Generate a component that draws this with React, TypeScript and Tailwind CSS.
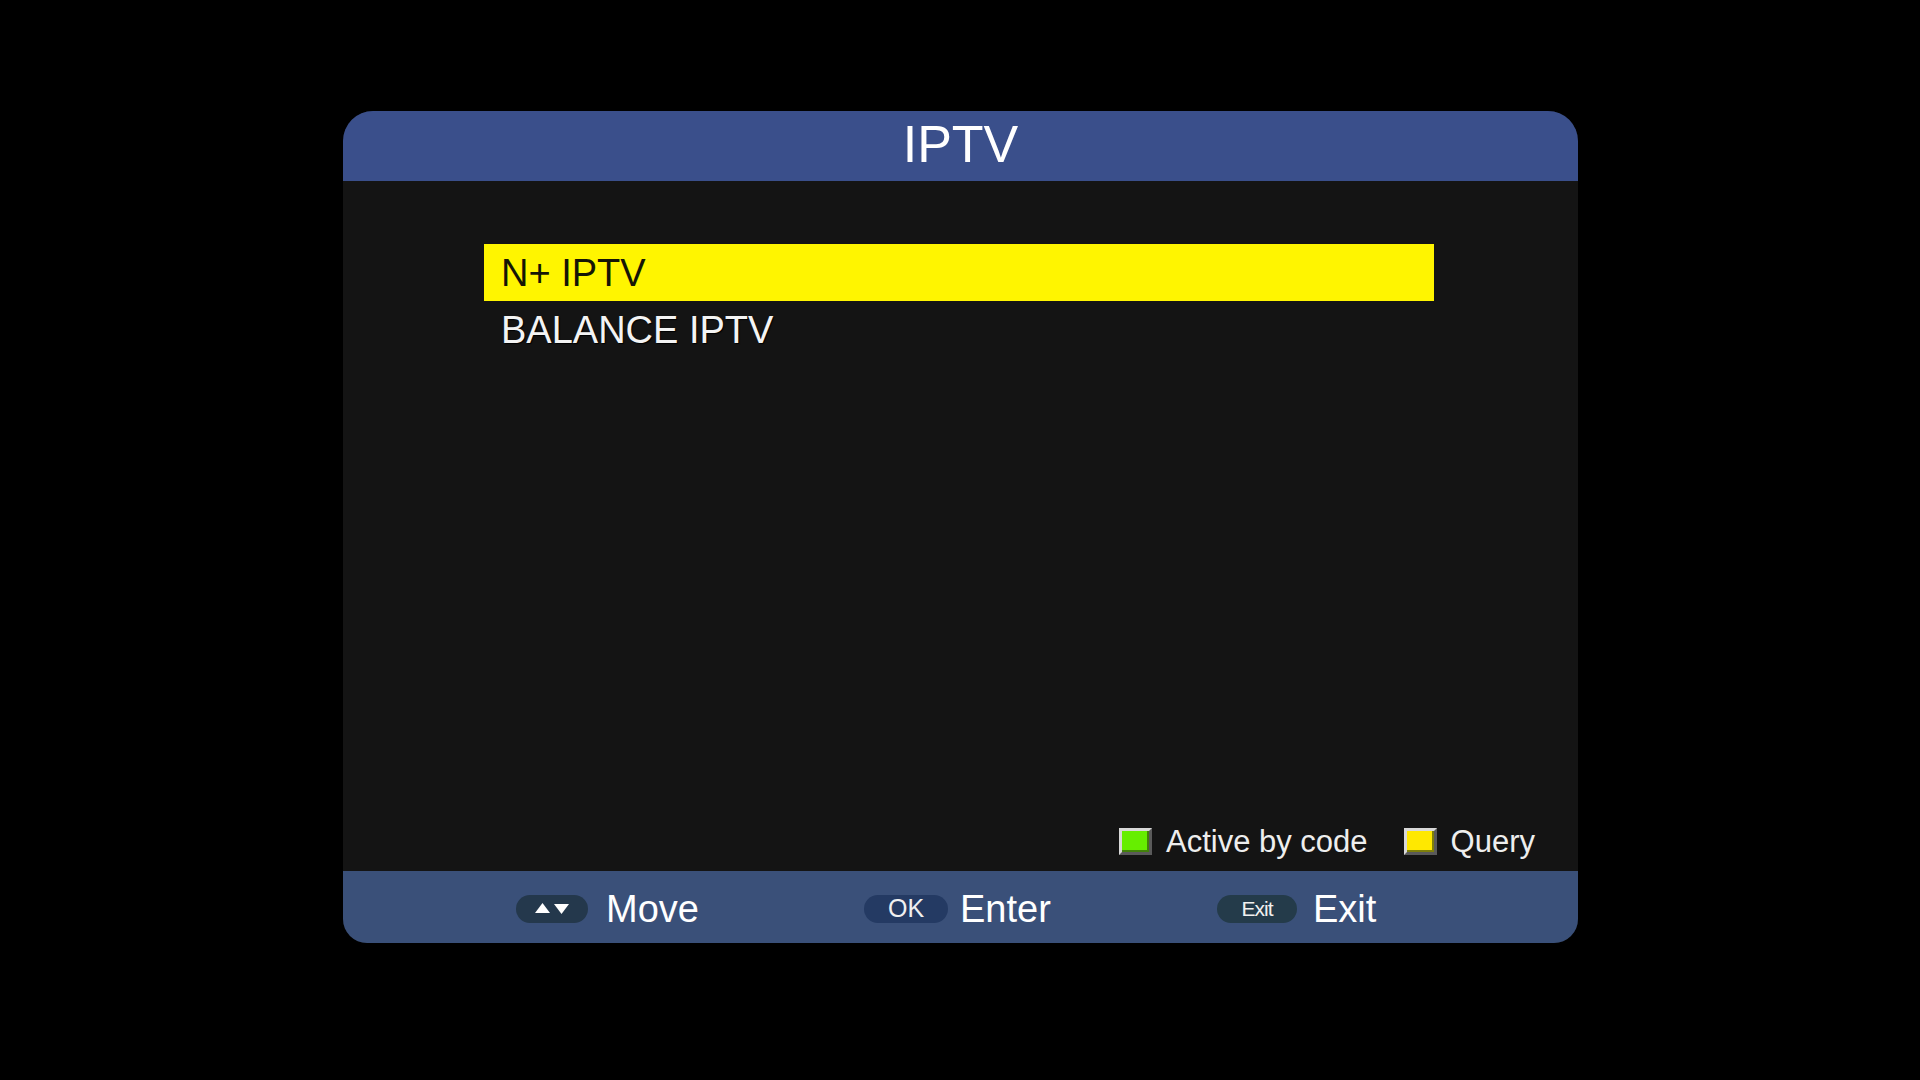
const items = ["N+ IPTV", "BALANCE IPTV"]

function Swatch({ color }: { color: string }) {
  return (
    <span className="inline-flex h-[27px] w-[33px] border-t-[3px] border-l-[3px] border-r-[3px] border-b-[3px] border-t-[#d8d8d8] border-l-[#d8d8d8] border-r-[#5a5a5a] border-b-[#5a5a5a]">
      <span className={`flex-1 ${color} border-r-2 border-b-2 border-r-[#2a3a10]/60 border-b-[#2a3a10]/60`} />
    </span>
  )
}

function Pill({ children, className }: { children: React.ReactNode; className: string }) {
  return (
    <span className={`flex h-[28px] items-center justify-center rounded-full ${className}`}>
      {children}
    </span>
  )
}

export default function App() {
  const selected = 0

  return (
    <div className="h-[1080px] w-[1920px] bg-black pt-[111px] pl-[343px] font-['Liberation_Sans',Arial,sans-serif]">
      <div className="flex h-[832px] w-[1235px] flex-col overflow-hidden rounded-t-[30px] rounded-b-[24px] bg-[#141414]">
        {/* title bar */}
        <div className="flex h-[70px] items-center justify-center bg-[#3a4f8b] pb-[4px]">
          <h1 className="text-[52px] leading-none text-white">IPTV</h1>
        </div>

        {/* menu list */}
        <div className="flex flex-1 flex-col px-[141px] pt-[63px]">
          {items.map((item, i) => (
            <div
              key={item}
              className={`flex h-[57px] w-[950px] items-center pl-[17px] text-[38px] leading-none ${
                i === selected ? "bg-[#fff500] text-[#151505]" : "text-[#f4f4f4] [text-shadow:1px_1px_1px_#000]"
              }`}
            >
              {item}
            </div>
          ))}
        </div>

        {/* colour key legend */}
        <div className="mb-[14px] flex items-center justify-end gap-[14px] pr-[43px] text-[31px] leading-none text-[#eeeeee]">
          <Swatch color="bg-[#66ee00]" />
          <span>Active by code</span>
          <span className="w-[8px]" />
          <Swatch color="bg-[#ffe800]" />
          <span>Query</span>
        </div>

        {/* key help bar */}
        <div className="grid h-[72px] grid-cols-[348px_353px_auto] items-center bg-[#3a5079] pl-[173px] pt-[3px] text-[38px] leading-none text-white">
          <div className="flex items-center gap-[18px]">
            <Pill className="w-[72px] gap-[4px] bg-[#24384c]">
              <svg width="15" height="11" viewBox="0 0 15 11">
                <path d="M0 10 L7.5 0 L15 10 Z" fill="white" />
              </svg>
              <svg width="15" height="11" viewBox="0 0 15 11">
                <path d="M0 1 L15 1 L7.5 11 Z" fill="white" />
              </svg>
            </Pill>
            <span>Move</span>
          </div>
          <div className="flex items-center gap-[12px]">
            <Pill className="w-[84px] bg-[#243a63] text-[25px] text-[#f0f0f0]">OK</Pill>
            <span>Enter</span>
          </div>
          <div className="flex items-center gap-[16px]">
            <Pill className="w-[80px] bg-[#243b4a] text-[21px] tracking-[-1px] text-[#f0f0f0]">Exit</Pill>
            <span>Exit</span>
          </div>
        </div>
      </div>
    </div>
  )
}
